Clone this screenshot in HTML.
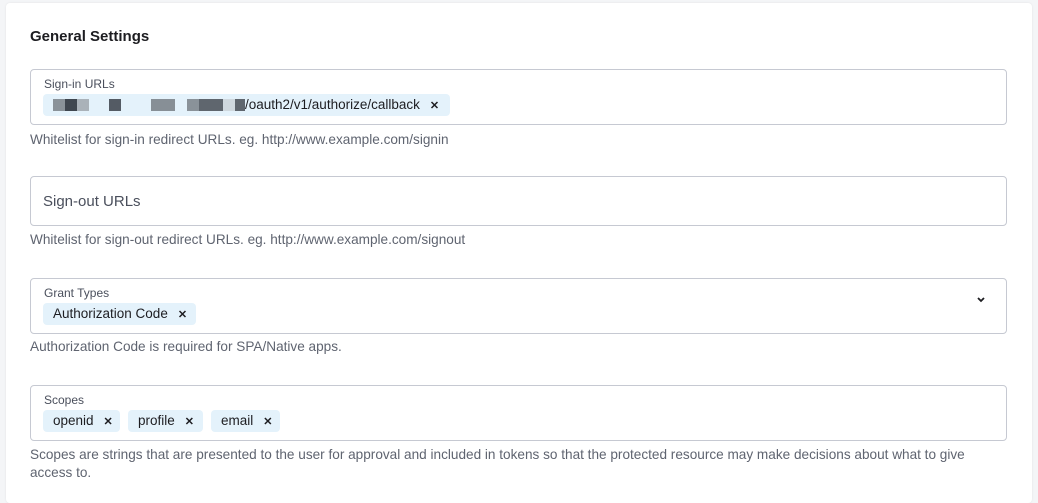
<!DOCTYPE html>
<html><head><style>
body{margin:0;width:1038px;height:492px;background:#f4f5f7;font-family:"Liberation Sans",sans-serif;overflow:hidden;position:relative}
.card{position:absolute;left:6px;top:3px;width:1026px;height:500px;background:#fff;border-radius:4px;box-shadow:0 0 2px rgba(0,0,0,.08)}
.a{position:absolute}
h2{position:absolute;left:30px;top:28px;margin:0;font-size:15px;font-weight:bold;color:#1d1d21}
.box{position:absolute;left:30px;width:975px;border:1px solid #c6c9d2;border-radius:4px;background:#fff}
.lbl{position:absolute;left:13px;font-size:12px;color:#4a4f5c}
.chip{position:absolute;height:22px;background:#e4f2fb;border-radius:4px;font-size:13.5px;color:#1d1d21;line-height:22px;padding:0 10px;box-sizing:border-box;white-space:nowrap}
.chip b{font-size:11px;margin-left:10px}
.help{position:absolute;left:30px;font-size:13.6px;color:#5f6470}
.px{display:inline-block;height:12px;vertical-align:middle}
</style></head><body>
<div class="card"></div>
<h2>General Settings</h2>
<div class="box" style="top:69px;height:54px">
 <div class="lbl" style="top:7px">Sign-in URLs</div>
 <div class="chip" style="left:12px;top:24px;width:407px;padding-left:10px">
  <span class="px" style="width:12px;background:#8a9299"></span><span class="px" style="width:12px;background:#3f464f"></span><span class="px" style="width:12px;background:#aab2b9"></span><span class="px" style="width:20px"></span><span class="px" style="width:12px;background:#545b64"></span><span class="px" style="width:30px"></span><span class="px" style="width:24px;background:#878f96"></span><span class="px" style="width:12px"></span><span class="px" style="width:12px;background:#8a9299"></span><span class="px" style="width:24px;background:#5f666e"></span><span class="px" style="width:12px;background:#cfd8de"></span><span class="px" style="width:10px;background:#5f666e"></span>/oauth2/v1/authorize/callback<b>✕</b>
 </div>
</div>
<div class="help" style="top:132px">Whitelist for sign-in redirect URLs. eg. http://www.example.com/signin</div>
<div class="box" style="top:176px;height:48px">
 <div class="a" style="left:12px;top:16px;font-size:15px;color:#4a4f5c">Sign-out URLs</div>
</div>
<div class="help" style="top:232px">Whitelist for sign-out redirect URLs. eg. http://www.example.com/signout</div>
<div class="box" style="top:278px;height:54px">
 <div class="lbl" style="top:7px">Grant Types</div>
 <div class="chip" style="left:12px;top:24px;width:153px">Authorization Code<b>✕</b></div>
 <svg class="a" style="left:945px;top:17px" width="10" height="8" viewBox="0 0 10 8"><path d="M2 2l3 3 3-3" stroke="#1d1d21" stroke-width="1.8" fill="none"/></svg>
</div>
<div class="help" style="top:339px">Authorization Code is required for SPA/Native apps.</div>
<div class="box" style="top:385px;height:54px">
 <div class="lbl" style="top:7px">Scopes</div>
 <div class="chip" style="left:12px;top:24px;width:77px">openid<b>✕</b></div>
 <div class="chip" style="left:97px;top:24px;width:75px">profile<b>✕</b></div>
 <div class="chip" style="left:180px;top:24px;width:69px">email<b>✕</b></div>
</div>
<div class="help" style="top:446px;line-height:18px;width:975px">Scopes are strings that are presented to the user for approval and included in tokens so that the protected resource may make decisions about what to give access to.</div>
</body></html>
